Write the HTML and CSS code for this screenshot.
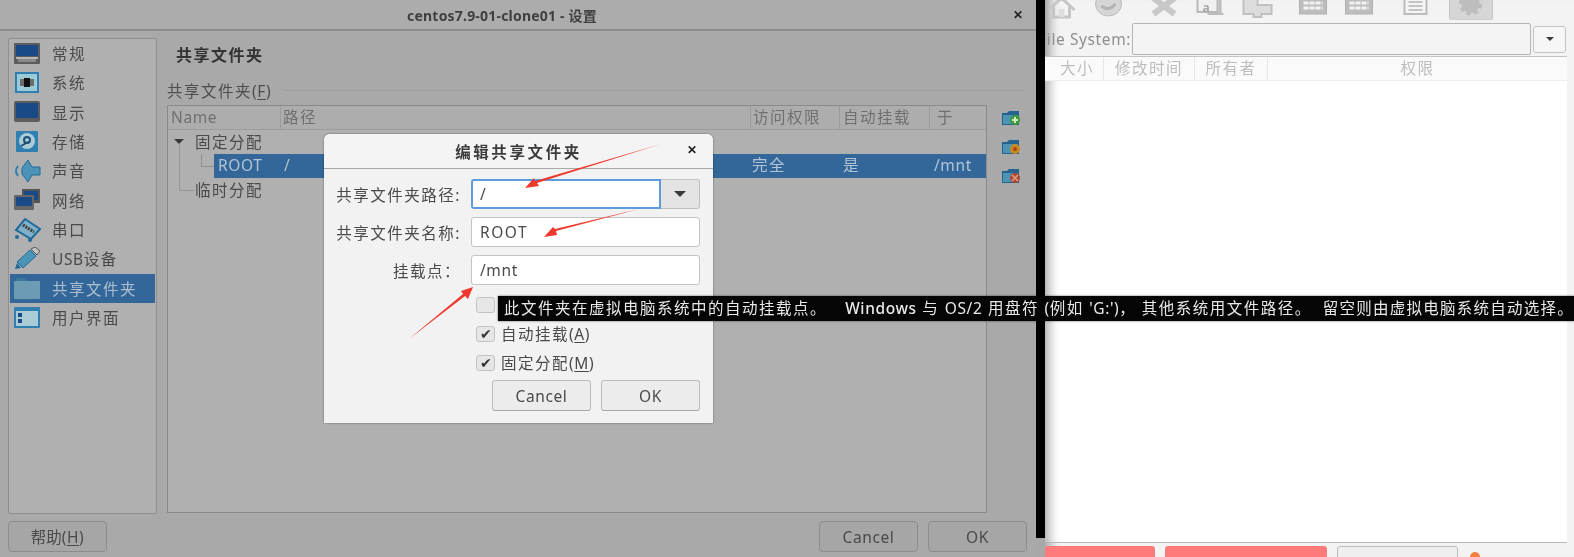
FILE: index.html
```html
<!DOCTYPE html>
<html lang="zh-CN">
<head>
    <meta charset="UTF-8">
    <title>centos7.9-01-clone01 - 设置</title>
    <link rel="stylesheet" href="styles.css">
</head>
<body>

    <div class="settings">
        <div class="titlebar">
            <span class="title">centos7.9-01-clone01 - 设置</span>
            <span class="close">✕</span>
        </div>

        <div class="settings-body">
            <ul class="side">
                <li>
                    <svg viewBox="0 0 28 24"><rect x="1" y="1" width="26" height="21" rx="1" fill="#5c5c5c"/><rect x="3" y="3" width="22" height="11" fill="#174a86"/><rect x="3" y="15" width="22" height="2" fill="#b5b5b5"/><rect x="5" y="17" width="18" height="3" fill="#8a8a8a"/></svg>
                    <span>常规</span>
                </li>
                <li>
                    <svg viewBox="0 0 28 24"><rect x="2" y="1" width="24" height="21" fill="#2f7fb0"/><rect x="4" y="3" width="20" height="17" fill="#9ccbd8"/><rect x="7" y="8" width="14" height="7" fill="#6b6b6b"/><rect x="11" y="7" width="6" height="9" fill="#111"/></svg>
                    <span>系统</span>
                </li>
                <li>
                    <svg viewBox="0 0 28 24"><rect x="1" y="1" width="26" height="21" rx="2" fill="#5c5c5c"/><rect x="3" y="3" width="22" height="15" fill="#174a86"/></svg>
                    <span>显示</span>
                </li>
                <li>
                    <svg viewBox="0 0 28 24"><rect x="3" y="1" width="22" height="21" rx="1" fill="#2f7fb0"/><circle cx="14" cy="11" r="8" fill="#a9ccd6"/><circle cx="14" cy="10" r="3" fill="none" stroke="#1d4f78" stroke-width="2"/><path d="M8 16 L15 12" stroke="#1d4f78" stroke-width="2"/></svg>
                    <span>存储</span>
                </li>
                <li>
                    <svg viewBox="0 0 28 24"><path d="M9 9 L15 1 L19 8 L27 8 L27 16 L19 16 L15 23 L9 15 Z" fill="#4b94b8" stroke="#1f6a99"/><path d="M5 7 Q1 12 5 17" fill="none" stroke="#2f7fb0" stroke-width="2"/></svg>
                    <span>声音</span>
                </li>
                <li>
                    <svg viewBox="0 0 28 24"><rect x="9" y="1" width="18" height="14" fill="#555"/><rect x="11" y="3" width="14" height="9" fill="#174a86"/><rect x="1" y="7" width="20" height="15" rx="1" fill="#666"/><rect x="3" y="9" width="16" height="9" fill="#174a86"/></svg>
                    <span>网络</span>
                </li>
                <li>
                    <svg viewBox="0 0 28 24"><path d="M12 1 L27 11 L18 21 L3 12 Z" fill="#7fb0c8" stroke="#1f6a99" stroke-width="2"/><path d="M10 7 L21 14" stroke="#3c3c3c" stroke-width="3" stroke-dasharray="2 1"/><circle cx="4" cy="19" r="2" fill="#1f6a99"/><circle cx="17" cy="22" r="2" fill="#1f6a99"/></svg>
                    <span>串口</span>
                </li>
                <li>
                    <svg viewBox="0 0 28 24"><path d="M4 15 L17 3 L23 9 L10 21 Z" fill="#4b94b8" stroke="#1f6a99"/><path d="M18 2 L22 0 L27 4 L24 8 Z" fill="#c4c4c4" stroke="#555"/><path d="M4 16 L2 22 L8 21" fill="#1f6a99"/></svg>
                    <span><span class="en">USB</span>设备</span>
                </li>
                <li class="current">
                    <svg viewBox="0 0 28 24"><rect x="1" y="5" width="26" height="18" rx="1" fill="#6b9cb3"/><path d="M3 5 L3 2 L12 2 L14 5 Z" fill="#3f789c"/></svg>
                    <span>共享文件夹</span>
                </li>
                <li>
                    <svg viewBox="0 0 28 24"><rect x="1" y="1" width="26" height="21" rx="1" fill="#2f7fb0"/><rect x="3" y="5" width="22" height="15" fill="#a9ccd6"/><rect x="5" y="7" width="4" height="4" fill="#174a86"/><rect x="5" y="13" width="4" height="4" fill="#174a86"/></svg>
                    <span>用户界面</span>
                </li>
            </ul>

            <div class="page">
                <h2>共享文件夹</h2>
                <div class="group-label"><span>共享文件夹<span class="en">(<u>F</u>)</span></span><i></i></div>

                <div class="table-wrap">
                    <div class="table">
                        <div class="thead">
                            <span class="c-name en">Name</span>
                            <span class="c-path">路径</span>
                            <span class="c-access">访问权限</span>
                            <span class="c-auto">自动挂载</span>
                            <span class="c-at">于</span>
                        </div>
                        <div class="tree-group first"><b class="arrow"></b>固定分配</div>
                        <div class="tree-row">
                            <span class="c-name en">ROOT</span>
                            <span class="c-path">/</span>
                            <span class="c-access">完全</span>
                            <span class="c-auto">是</span>
                            <span class="c-at en">/mnt</span>
                        </div>
                        <div class="tree-group last">临时分配</div>
                    </div>

                    <div class="table-tools">
                        <svg viewBox="0 0 20 17"><path d="M1 4 L1 16 L18 16 L18 2 L8 2 L6 4 Z" fill="#24638f"/><rect x="2" y="6" width="15" height="9" fill="#4c93b5"/><circle cx="14" cy="11" r="5" fill="#3e9a37"/><path d="M14 8 V14 M11 11 H17" stroke="#cfe9c4" stroke-width="2"/></svg>
                        <svg viewBox="0 0 20 17"><path d="M1 4 L1 16 L18 16 L18 2 L8 2 L6 4 Z" fill="#24638f"/><rect x="2" y="6" width="15" height="9" fill="#4c93b5"/><circle cx="14" cy="11" r="5" fill="#c98a1e"/><circle cx="14" cy="11" r="2" fill="#a8481c"/></svg>
                        <svg viewBox="0 0 20 17"><path d="M1 4 L1 16 L18 16 L18 2 L8 2 L6 4 Z" fill="#24638f"/><rect x="2" y="6" width="15" height="9" fill="#4c93b5"/><circle cx="14" cy="11" r="5" fill="#b5452c"/><path d="M11 8 L17 14 M17 8 L11 14" stroke="#d9a08e" stroke-width="1.5"/></svg>
                    </div>
                </div>
            </div>
        </div>

        <div class="settings-foot">
            <button class="btn-dim">帮助<span class="en">(<u>H</u>)</span></button>
            <div class="foot-right">
                <button class="btn-dim en">Cancel</button>
                <button class="btn-dim en">OK</button>
            </div>
        </div>
    </div>

    <div class="black-bar"></div>

    <div class="files">
        <svg class="toolbar" viewBox="0 0 528 20">
            <path d="M1 10 L14 -2 L27 10 M6 7 V17 H22 V7" fill="none" stroke="#c6c6c6" stroke-width="3"/>
            <rect x="11" y="9" width="6" height="8" fill="#dedede"/>
            <ellipse cx="61" cy="4" rx="13" ry="12" fill="#d6d6d6" stroke="#bcbcbc"/>
            <path d="M54 6 Q61 12 68 4" fill="none" stroke="#b4b4b4" stroke-width="3"/>
            <path d="M106 -2 L127 14 M127 -2 L106 14" stroke="#c8c8c8" stroke-width="6"/>
            <rect x="150" y="-4" width="20" height="16" fill="#f0f0f0" stroke="#b8b8b8" stroke-width="2"/>
            <text x="155" y="12" class="tool-a">a</text>
            <rect x="171" y="-4" width="3" height="19" fill="#bcbcbc"/>
            <path d="M160 14 H176" stroke="#bcbcbc" stroke-width="2"/>
            <path d="M196 -2 H210 V5 H224 V14 H214 V17 H206 V14 H196 Z" fill="#dcdcdc" stroke="#c0c0c0" stroke-width="2"/>
            <rect x="252" y="-4" width="27" height="18" fill="#bdbdbd" stroke="#b0b0b0"/>
            <path d="M256 3 H275 M256 8 H275" stroke="#f2f2f2" stroke-width="3" stroke-dasharray="5 1"/>
            <rect x="298" y="-4" width="27" height="18" fill="#bdbdbd" stroke="#b0b0b0"/>
            <path d="M302 3 H321 M302 8 H321" stroke="#f2f2f2" stroke-width="3" stroke-dasharray="5 1"/>
            <rect x="357" y="-4" width="22" height="18" fill="#f4f4f4" stroke="#bcbcbc" stroke-width="2"/>
            <path d="M361 2 H375 M361 6 H375 M361 10 H375" stroke="#c4c4c4" stroke-width="2"/>
            <rect x="402" y="-2" width="43" height="22" rx="2" fill="#d6d6d6" stroke="#c6c6c6"/>
            <circle cx="423" cy="4" r="9" fill="#bdbdbd" stroke="#bdbdbd" stroke-width="5" stroke-dasharray="4 3"/>
        </svg>

        <div class="fs-row">
            <label><span>File System:</span></label>
            <div class="fs-input"></div>
            <div class="fs-drop"><b class="arrow small"></b></div>
        </div>

        <div class="file-head">
            <span class="f-size">大小</span>
            <span class="f-time">修改时间</span>
            <span class="f-owner">所有者</span>
            <span class="f-perm">权限</span>
        </div>
        <div class="file-list"></div>

        <div class="file-foot">
            <span class="red r1"></span>
            <span class="red r2"></span>
            <span class="plain"></span>
            <span class="dot"></span>
        </div>
    </div>

    <!-- 弹出的对话框 -->
    <div class="dialog">
        <div class="dialog-title">
            <span>编辑共享文件夹</span>
            <span class="close">✕</span>
        </div>
        <div class="form">
            <label>共享文件夹路径:</label>
            <div class="combo">
                <div class="input focus">/</div>
                <div class="combo-btn"><b class="arrow"></b></div>
            </div>
            <label>共享文件夹名称:</label>
            <div class="input">ROOT</div>
            <label class="mount">挂载点：</label>
            <div class="input en">/mnt</div>
        </div>
        <div class="checks">
            <div class="check"><span class="box"></span></div>
            <div class="check"><span class="box on">✔</span><span>自动挂载<span class="en">(<u>A</u>)</span></span></div>
            <div class="check"><span class="box on">✔</span><span>固定分配<span class="en">(<u>M</u>)</span></span></div>
        </div>
        <div class="dialog-foot">
            <button class="en">Cancel</button>
            <button class="en">OK</button>
        </div>
    </div>

    <div class="tooltip">此文件夹在虚拟电脑系统中的自动挂载点。 <span class="en tip-win">&nbsp;Windows</span> 与 <span class="en">OS/2</span> 用盘符 <span class="en">(</span>例如 <span class="en">'G:')</span>， 其他系统用文件路径。 <span class="tip-rest">&nbsp;留空则由虚拟电脑系统自动选择。</span></div>

    <!-- 红色箭头 -->
    <svg class="marks" viewBox="0 0 1574 557">
        <path d="M661 144 L537 183 L539 186 L525 188 L534 178 L535 181 Z" />
        <path d="M639 209 L556 231 L557 235 L544 237 L553 227 L555 229 Z" />
        <path d="M409 339 L463 294 L461 291 L473 287 L468 299 L465 296 Z" />
    </svg>

</body>
</html>
```

FILE: styles.css
```css
* {
    box-sizing: border-box;
}

html, body {
    margin: 0;
    height: 557px;
    overflow: hidden;
    background-color: #a8a8a8;
}

body {
    display: flex;
    position: relative;
    width: 1574px;
    font-family: "Noto Sans", "Noto Sans CJK SC", sans-serif;
    font-size: 15.5px;
    letter-spacing: 1.5px;
    color: #4a4a4a;
    filter: blur(0.5px);
}

.en {
    letter-spacing: 0.6px;
}

u {
    text-underline-offset: 2px;
}

.arrow {
    display: inline-block;
    width: 0;
    height: 0;
    border-left: 6px solid transparent;
    border-right: 6px solid transparent;
    border-top: 6px solid #3a3a3a;
}

.arrow.small {
    border-left-width: 4px;
    border-right-width: 4px;
    border-top-width: 4px;
}

/* 设置窗口 */
.settings {
    width: 1036px;
    height: 557px;
    display: flex;
    flex-direction: column;
    background-color: #a9a9a9;
    border-top-right-radius: 6px;
}

.titlebar {
    height: 31px;
    flex: none;
    display: flex;
    align-items: center;
    justify-content: center;
    position: relative;
    border-bottom: 2px solid #8c8c8c;
    background-color: #acacac;
}

.title {
    font-weight: 700;
    font-size: 14px;
    letter-spacing: 0.2px;
    color: #3f3f3f;
    padding-right: 32px;
}

.close {
    position: absolute;
    right: 13px;
    top: 6px;
    font-size: 12px;
    font-weight: 700;
    letter-spacing: 0;
    color: #222;
}

.settings-body {
    flex: 1;
    display: flex;
    gap: 10px;
    padding: 7px 0 0 8px;
    min-height: 0;
}

.side {
    width: 149px;
    height: 476px;
    margin: 0;
    padding: 0 1px 1px;
    list-style: none;
    background-color: #b0b0b0;
    border: 1px solid #8f8f8f;
    border-radius: 2px;
}

.side li {
    height: 29.33px;
    display: flex;
    align-items: center;
    gap: 11px;
    padding-left: 3px;
}

.side li svg {
    width: 28px;
    height: 24px;
    flex: none;
}

.side li.current {
    background-color: #336699;
    color: #aebfcf;
}

.page {
    flex: 1;
    display: flex;
    flex-direction: column;
    min-width: 0;
}

.page h2 {
    margin: 0;
    padding: 6px 0 0 9px;
    height: 37px;
    line-height: 22px;
    font-size: 16px;
    font-weight: 700;
    color: #333;
}

.group-label {
    display: flex;
    align-items: center;
    gap: 12px;
    height: 30px;
    padding-right: 12px;
    color: #4e4e4e;
}

.group-label i {
    flex: 1;
    height: 1px;
    background-color: #9f9f9f;
}

.table-wrap {
    display: flex;
    gap: 8px;
}

.table {
    width: 820px;
    height: 408px;
    border: 1px solid #8a8a8a;
    background-color: #b0b0b0;
}

.thead {
    display: flex;
    height: 24px;
    background-color: #adadad;
    border-bottom: 1px solid #9c9c9c;
    color: #6f6f6f;
    line-height: 23px;
}

.thead span {
    padding-left: 3px;
    border-right: 1px solid #9c9c9c;
}

.thead .c-path,
.thead .c-access {
    padding-left: 2px;
}

.thead .c-at {
    padding-left: 7px;
    border-right: none;
}

.c-name {
    width: 113px;
}

.c-path {
    width: 470px;
}

.c-access {
    width: 89px;
}

.c-auto {
    width: 90px;
}

.c-at {
    width: 56px;
}

.tree-group {
    height: 24px;
    line-height: 24px;
    padding-left: 27px;
    position: relative;
}

.tree-group.first .arrow {
    position: absolute;
    left: 6px;
    top: 9px;
    border-left-width: 5px;
    border-right-width: 5px;
    border-top-width: 5px;
}

/* 树的连接线 */
.tree-group.last::before {
    content: "";
    position: absolute;
    left: 11px;
    top: -34px;
    width: 14px;
    height: 46px;
    border-left: 1px solid #949494;
    border-bottom: 1px solid #949494;
}

.tree-group + .tree-row::before {
    content: "";
    position: absolute;
    left: -13px;
    top: 0;
    width: 12px;
    height: 12px;
    border-left: 1px solid #8f8f8f;
    border-bottom: 1px solid #8f8f8f;
}

.tree-row {
    display: flex;
    position: relative;
    margin-left: 46px;
    height: 24px;
    line-height: 23px;
    background-color: #336699;
    color: #b3c4d4;
}

.tree-row .c-name {
    width: 67px;
    padding-left: 4px;
}

.tree-row .c-path {
    padding-left: 3px;
}

.tree-row .c-access {
    padding-left: 1px;
}

.tree-row .c-auto {
    padding-left: 3px;
}

.tree-row .c-at {
    padding-left: 4px;
}

.table-tools {
    display: flex;
    flex-direction: column;
    gap: 12px;
    padding: 4px 0 0 6px;
}

.table-tools svg {
    width: 20px;
    height: 17px;
}

.settings-foot {
    height: 44px;
    flex: none;
    display: flex;
    justify-content: space-between;
    padding: 8px 9px 5px 8px;
}

.foot-right {
    display: flex;
    gap: 10px;
}

.btn-dim {
    width: 99px;
    height: 31px;
    padding: 0;
    font-family: inherit;
    font-size: inherit;
    color: #4a4a4a;
    background-color: #a6a6a6;
    border: 1px solid #8d8d8d;
    border-radius: 4px;
}

/* 中间的黑条 */
.black-bar {
    width: 10px;
    height: 538px;
    flex: none;
    background-color: #000;
}

/* 右边的文件窗口 */
.files {
    flex: 1;
    display: flex;
    flex-direction: column;
    min-width: 0;
    margin-left: -1px;
    background-color: #f3f3f3;
    box-shadow: inset 14px 0 12px -10px rgba(0, 0, 0, 0.4);
    color: #a9a9a9;
}

.toolbar {
    width: 529px;
    height: 20px;
    flex: none;
    margin-left: 2px;
}

.tool-a {
    font-size: 12px;
    font-weight: 700;
    letter-spacing: 0;
    fill: #a8a8a8;
}

.fs-row {
    height: 34px;
    margin-top: 2px;
    display: flex;
    align-items: center;
    color: #8f8f8f;
}

.fs-row label {
    width: 86px;
    margin-right: 1px;
    display: flex;
    justify-content: flex-end;
    overflow: hidden;
    white-space: nowrap;
    letter-spacing: 0.6px;
}

.fs-row label span {
    flex: none;
}

.fs-input {
    width: 399px;
    height: 32px;
    background-color: #f4f4f4;
    border: 1px solid #b5b5b5;
    border-radius: 2px;
}

.fs-drop {
    width: 33px;
    height: 27px;
    margin-left: 2px;
    display: flex;
    align-items: center;
    justify-content: center;
    background-color: #f6f6f6;
    border: 1px solid #c4c4c4;
    border-radius: 3px;
}

.file-head {
    height: 25px;
    flex: none;
    display: flex;
    line-height: 22px;
    text-align: center;
    background-color: #fafafa;
    border-bottom: 1px solid #eeeeee;
    border-top: 1px solid #c4c4c4;
    margin-right: 7px;
    color: #bdbdbd;
}

.file-head span {
    border-right: 1px solid #e6e6e6;
}

.f-size {
    width: 59px;
    padding-left: 6px;
}

.f-time {
    width: 91px;
}

.f-owner {
    width: 73px;
}

.f-perm {
    flex: 1;
    border-right: none !important;
}

.file-list {
    flex: 1;
    margin-right: 7px;
    background-color: #fff;
    border-bottom: 1px solid #b8b8b8;
    box-shadow: inset 14px 0 12px -10px rgba(0, 0, 0, 0.35);
}

.file-foot {
    height: 14px;
    flex: none;
    display: flex;
    align-items: flex-start;
    padding-top: 3px;
}

.file-foot span {
    display: block;
    height: 12px;
    border-radius: 3px 3px 0 0;
}

.red {
    background-color: #ff7b7b;
}

.r1 {
    width: 110px;
}

.r2 {
    width: 162px;
    margin-left: 10px;
}

.plain {
    width: 121px;
    margin-left: 10px;
    background-color: #efefef;
    border: 1px solid #bbbbbb;
}

.file-foot .dot {
    width: 10px;
    height: 10px;
    margin: 6px 0 0 12px;
    border-radius: 50%;
    background-color: #f08040;
}

/* 对话框 */
.dialog {
    position: absolute;
    left: 324px;
    top: 134px;
    width: 389px;
    height: 289px;
    display: flex;
    flex-direction: column;
    background-color: #f2f2f2;
    border-radius: 6px 6px 0 0;
    box-shadow: 0 0 2px rgba(0, 0, 0, 0.5);
    color: #4a4a4a;
}

.dialog-title {
    height: 35px;
    flex: none;
    display: flex;
    align-items: center;
    justify-content: center;
    position: relative;
    font-weight: 700;
    letter-spacing: 2.6px;
    color: #3c3c3c;
    background-color: #f4f4f4;
    border-bottom: 1px solid #a9a9a9;
    border-radius: 6px 6px 0 0;
}

.dialog-title .close {
    right: 16px;
    top: 7px;
}

.form {
    display: grid;
    grid-template-columns: 137px 229px;
    grid-auto-rows: 30px;
    row-gap: 8px;
    align-items: center;
    column-gap: 10px;
    padding: 10px 13px 0 0;
}

.form label {
    text-align: right;
    white-space: nowrap;
}

.input {
    height: 30px;
    line-height: 28px;
    padding: 0 8px;
    background-color: #fff;
    border: 1px solid #c4c4c4;
    border-radius: 3px;
}

.input.focus {
    flex: 1;
    border: 2px solid #5c9bdc;
    border-radius: 3px 0 0 3px;
    line-height: 26px;
    padding: 0 7px;
}

.combo {
    display: flex;
}

.combo-btn {
    width: 39px;
    height: 30px;
    display: flex;
    align-items: center;
    justify-content: center;
    background-color: #e4e4e4;
    border: 1px solid #c0c0c0;
    border-left: none;
    border-radius: 0 3px 3px 0;
}

.checks {
    margin: 5px 0 0 152px;
}

.check {
    height: 29px;
    display: flex;
    align-items: center;
    gap: 6px;
}

.box {
    width: 19px;
    height: 16px;
    display: flex;
    align-items: center;
    justify-content: center;
    background-color: #e6e6e6;
    border: 1px solid #c2c2c2;
    border-radius: 3px;
    font-size: 14px;
    letter-spacing: 0;
    color: #333;
}

.dialog-foot {
    display: flex;
    justify-content: flex-end;
    gap: 10px;
    padding: 3px 13px 0 0;
}

.dialog-foot button {
    width: 99px;
    height: 31px;
    padding: 0;
    font-family: inherit;
    font-size: inherit;
    color: #4a4a4a;
    background-color: #ececec;
    border: 1px solid #bdbdbd;
    border-bottom-color: #a8a8a8;
    border-radius: 3px;
}

.tooltip {
    position: absolute;
    left: 498px;
    top: 296px;
    width: 1076px;
    height: 25px;
    padding-left: 6px;
    line-height: 24px;
    white-space: nowrap;
    overflow: hidden;
    color: #e8e8e8;
    background-color: #050505;
    box-shadow: 0 0 2px rgba(0, 0, 0, 0.6);
}

.tip-win {
    margin-left: 8px;
    font-weight: 500;
}

.tip-rest {
    letter-spacing: 1.25px;
}

.marks {
    position: absolute;
    left: 0;
    top: 0;
    width: 1574px;
    height: 557px;
    pointer-events: none;
}

.marks path {
    fill: #f0392e;
}
```
